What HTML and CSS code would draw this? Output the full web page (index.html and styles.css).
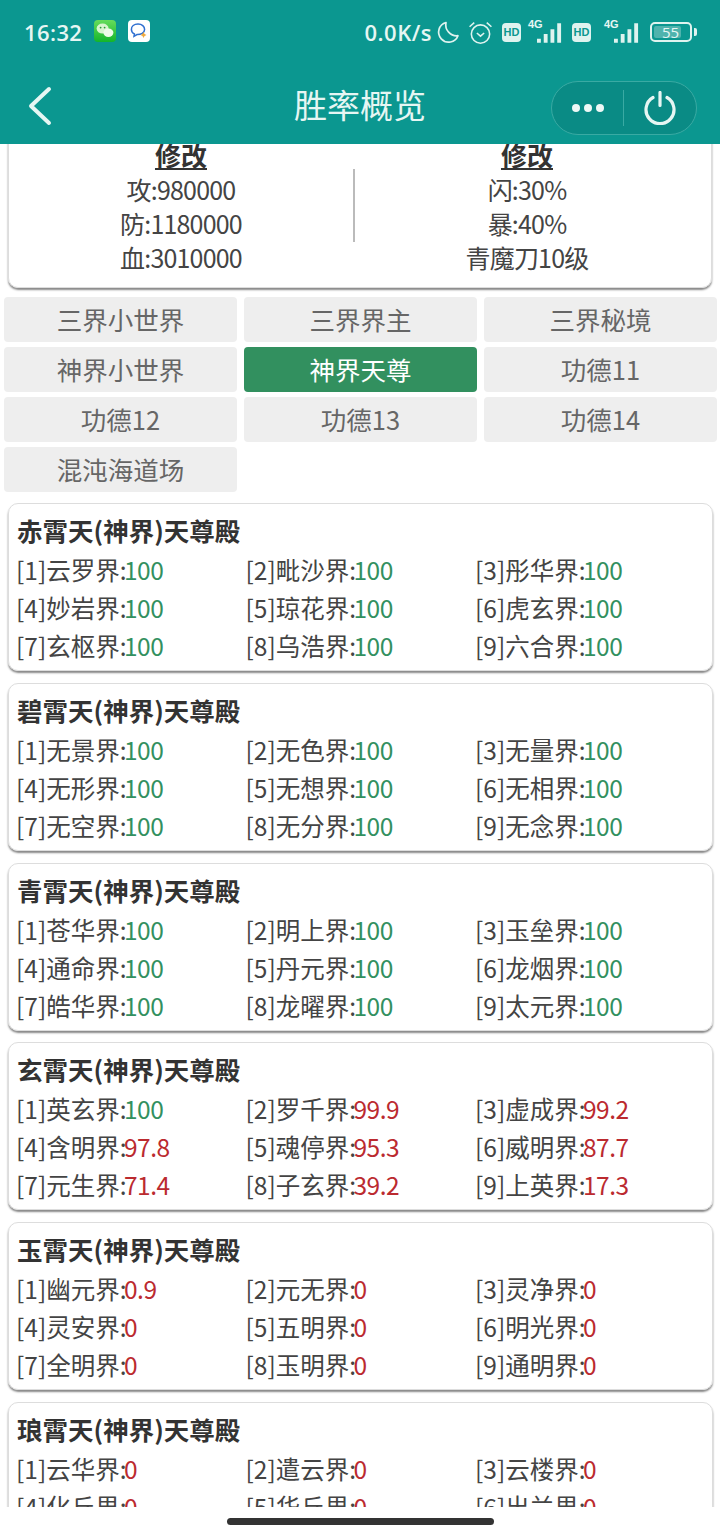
FILE: index.html
```html
<!DOCTYPE html>
<html lang="zh-CN">
<head>
    <meta charset="UTF-8">
    <meta name="viewport" content="width=device-width, initial-scale=1.0">
    <title>胜率概览</title>
    <link rel="stylesheet" href="styles.css">
</head>
<body>
<div class="phone">
    <header class="top">
        <div class="status">
            <span class="time">16:32</span>
            <svg class="app-icon" viewBox="0 0 22 22"><defs><linearGradient id="wx" x1="0" y1="0" x2="0" y2="1"><stop offset="0" stop-color="#66dc5c"/><stop offset="1" stop-color="#14b52a"/></linearGradient></defs><rect width="22" height="22" rx="4" fill="url(#wx)"/><ellipse cx="8.600" cy="8.600" rx="6" ry="5" fill="#d8f5d0"/><ellipse cx="14.400" cy="12.800" rx="5" ry="4.200" fill="#eefbe9"/><circle cx="6.600" cy="7.600" r=".9" fill="#2a9a35"/><circle cx="10.600" cy="7.600" r=".9" fill="#2a9a35"/></svg>
            <svg class="app-icon second" viewBox="0 0 22 22"><rect width="22" height="22" rx="4" fill="#fff"/><path d="M10 4c-4 0-6.600 2.400-6.600 5.400 0 2 1.200 3.600 3 4.500l-.4 2.400 3-1.700c3.800.2 7.600-1.800 7.600-5.200C16.600 6.400 14 4 10 4z" fill="none" stroke="#2f6fd0" stroke-width="1.500"/><path d="M15.500 12l1 2 2 1-2 1-1 2-1-2-2-1 2-1z" fill="#f1a93a"/></svg>
            <span class="status-right">
                <span class="speed">0.0K/s</span>
                <svg class="moon" viewBox="0 0 24 24"><path d="M10 2.500a10 10 0 1 0 12 13.200A11 11 0 0 1 10 2.500z" fill="none" stroke="#dff3ef" stroke-width="1.700" stroke-linejoin="round"/></svg>
                <svg class="alarm" viewBox="0 0 24 24"><circle cx="12" cy="13.500" r="8.800" fill="none" stroke="#dff3ef" stroke-width="1.500"/><path d="M8.500 12.500l3.500 3 3.500-3M1.500 6.500L6 2.500M22.500 6.500L18 2.500" fill="none" stroke="#dff3ef" stroke-width="1.500"/></svg>
                <span class="hd">HD</span>
                <span class="signal">
                    <span class="net">4G</span>
                    <svg viewBox="0 0 27 20"><path d="M0 20v-4h4v4zM7 20v-9h4v9zM14 20V6h4v14zM21 20V0h4v20z" fill="#dff3ef"/></svg>
                </span>
                <span class="hd">HD</span>
                <span class="signal wide">
                    <span class="net">4G</span>
                    <svg viewBox="0 0 27 20"><path d="M0 20v-4h4v4zM7 20v-9h4v9zM14 20V6h4v14zM21 20V0h4v20z" fill="#dff3ef"/></svg>
                </span>
                <span class="battery"><span class="battery-num">55</span></span>
                <span class="battery-tip"></span>
            </span>
        </div>
        <nav class="nav">
            <svg class="back" viewBox="0 0 26 40"><path d="M22 3L4 20l18 17" fill="none" stroke="#e6f6f3" stroke-width="4" stroke-linecap="round" stroke-linejoin="round"/></svg>
            <h1 class="title">胜率概览</h1>
            <div class="capsule">
                <span class="dots"><i></i><i></i><i></i></span>
                <span class="capsule-line"></span>
                <svg class="power" viewBox="0 0 34 34"><path d="M10 6.500a14 14 0 1 0 14 0M17 1.500v13" fill="none" stroke="#e6f6f3" stroke-width="3.200" stroke-linecap="round"/></svg>
            </div>
        </nav>
    </header>

    <main class="content">
        <div class="summary">
            <div class="summary-col">
                <div class="summary-head">修改</div>
                <div>攻:980000</div>
                <div>防:1180000</div>
                <div>血:3010000</div>
            </div>
            <div class="summary-line"></div>
            <div class="summary-col">
                <div class="summary-head">修改</div>
                <div>闪:30%</div>
                <div>暴:40%</div>
                <div>青魔刀10级</div>
            </div>
        </div>

        <div class="tabs">
            <div class="tab">三界小世界</div>
            <div class="tab">三界界主</div>
            <div class="tab">三界秘境</div>
            <div class="tab">神界小世界</div>
            <div class="tab active">神界天尊</div>
            <div class="tab">功德11</div>
            <div class="tab">功德12</div>
            <div class="tab">功德13</div>
            <div class="tab">功德14</div>
            <div class="tab">混沌海道场</div>
        </div>

        <section class="card">
            <h2>赤霄天(神界)天尊殿</h2>
            <div class="grid">
                <div>[1]云罗界:<span class="win">100</span></div>
                <div>[2]毗沙界:<span class="win">100</span></div>
                <div>[3]彤华界:<span class="win">100</span></div>
                <div>[4]妙岩界:<span class="win">100</span></div>
                <div>[5]琼花界:<span class="win">100</span></div>
                <div>[6]虎玄界:<span class="win">100</span></div>
                <div>[7]玄枢界:<span class="win">100</span></div>
                <div>[8]乌浩界:<span class="win">100</span></div>
                <div>[9]六合界:<span class="win">100</span></div>
            </div>
        </section>
        <section class="card">
            <h2>碧霄天(神界)天尊殿</h2>
            <div class="grid">
                <div>[1]无景界:<span class="win">100</span></div>
                <div>[2]无色界:<span class="win">100</span></div>
                <div>[3]无量界:<span class="win">100</span></div>
                <div>[4]无形界:<span class="win">100</span></div>
                <div>[5]无想界:<span class="win">100</span></div>
                <div>[6]无相界:<span class="win">100</span></div>
                <div>[7]无空界:<span class="win">100</span></div>
                <div>[8]无分界:<span class="win">100</span></div>
                <div>[9]无念界:<span class="win">100</span></div>
            </div>
        </section>
        <section class="card">
            <h2>青霄天(神界)天尊殿</h2>
            <div class="grid">
                <div>[1]苍华界:<span class="win">100</span></div>
                <div>[2]明上界:<span class="win">100</span></div>
                <div>[3]玉垒界:<span class="win">100</span></div>
                <div>[4]通命界:<span class="win">100</span></div>
                <div>[5]丹元界:<span class="win">100</span></div>
                <div>[6]龙烟界:<span class="win">100</span></div>
                <div>[7]皓华界:<span class="win">100</span></div>
                <div>[8]龙曜界:<span class="win">100</span></div>
                <div>[9]太元界:<span class="win">100</span></div>
            </div>
        </section>
        <section class="card">
            <h2>玄霄天(神界)天尊殿</h2>
            <div class="grid">
                <div>[1]英玄界:<span class="win">100</span></div>
                <div>[2]罗千界:<span class="lose">99.9</span></div>
                <div>[3]虚成界:<span class="lose">99.2</span></div>
                <div>[4]含明界:<span class="lose">97.8</span></div>
                <div>[5]魂停界:<span class="lose">95.3</span></div>
                <div>[6]威明界:<span class="lose">87.7</span></div>
                <div>[7]元生界:<span class="lose">71.4</span></div>
                <div>[8]子玄界:<span class="lose">39.2</span></div>
                <div>[9]上英界:<span class="lose">17.3</span></div>
            </div>
        </section>
        <section class="card">
            <h2>玉霄天(神界)天尊殿</h2>
            <div class="grid">
                <div>[1]幽元界:<span class="lose">0.9</span></div>
                <div>[2]元无界:<span class="lose">0</span></div>
                <div>[3]灵净界:<span class="lose">0</span></div>
                <div>[4]灵安界:<span class="lose">0</span></div>
                <div>[5]五明界:<span class="lose">0</span></div>
                <div>[6]明光界:<span class="lose">0</span></div>
                <div>[7]全明界:<span class="lose">0</span></div>
                <div>[8]玉明界:<span class="lose">0</span></div>
                <div>[9]通明界:<span class="lose">0</span></div>
            </div>
        </section>
        <section class="card">
            <h2>琅霄天(神界)天尊殿</h2>
            <div class="grid">
                <div>[1]云华界:<span class="lose">0</span></div>
                <div>[2]遣云界:<span class="lose">0</span></div>
                <div>[3]云楼界:<span class="lose">0</span></div>
                <div>[4]化丘界:<span class="lose">0</span></div>
                <div>[5]华丘界:<span class="lose">0</span></div>
                <div>[6]出兰界:<span class="lose">0</span></div>
            </div>
        </section>
    </main>

    <footer class="home-bar"><span class="home-pill"></span></footer>
</div>
</body>
</html>
```

FILE: styles.css
```css
* {
    box-sizing: border-box;
}

html, body {
    margin: 0;
    padding: 0;
}

body {
    font-family: "Noto Sans CJK SC", sans-serif;
    color: #444;
    background: #fff;
}

.phone {
    width: 720px;
    height: 1536px;
    display: flex;
    flex-direction: column;
    overflow: hidden;
}

/* barra de cima */
.top {
    height: 144px;
    flex: none;
    background: #0b9790;
    color: #e6f6f3;
}

.status {
    height: 64px;
    padding: 0 23px 0 24px;
    display: flex;
    align-items: center;
    font-family: "Open Sans", sans-serif;
}

.time {
    font-size: 22px;
    font-weight: 600;
    letter-spacing: .4px;
}

.app-icon {
    width: 22px;
    height: 22px;
    margin-left: 12px;
    margin-top: -2px;
}

.status-right {
    margin-left: auto;
    display: flex;
    align-items: center;
}

.speed {
    font-size: 22px;
    font-weight: 600;
    letter-spacing: .5px;
}

.moon {
    width: 24px;
    height: 24px;
    margin-left: 4px;
}

.alarm {
    width: 25px;
    height: 25px;
    margin-left: 8px;
}

.hd {
    width: 19px;
    height: 19px;
    margin-left: 9px;
    border-radius: 4px;
    background: #dff3ef;
    color: #0b9790;
    font-family: "Liberation Sans", sans-serif;
    font-size: 11px;
    font-weight: 700;
    line-height: 19px;
    text-align: center;
}

.signal {
    position: relative;
    width: 35px;
    height: 22px;
    margin-left: 7px;
    display: flex;
    align-items: flex-end;
    justify-content: flex-end;
}

.signal.wide {
    width: 38px;
    margin-left: 11px;
}

.signal svg {
    width: 26px;
    height: 20px;
}

.net {
    position: absolute;
    left: 0;
    top: -3px;
    font-family: "Liberation Sans", sans-serif;
    font-size: 11px;
    font-weight: 700;
}

.signal.wide .net {
    left: 2px;
}

.battery {
    width: 42px;
    height: 20px;
    margin-left: 10px;
    border: 2px solid #dff3ef;
    border-radius: 5px;
    padding: 2px;
    display: flex;
}

.battery-num {
    width: 27px;
    background: #4fb3ad;
    border-radius: 2px;
    font-size: 15px;
    line-height: 12px;
    white-space: nowrap;
    text-indent: 8px;
}

.battery-tip {
    width: 3px;
    height: 8px;
    margin-left: 2px;
    border-radius: 0 2px 2px 0;
    background: #dff3ef;
}

.nav {
    position: relative;
    height: 80px;
    display: flex;
    align-items: center;
    justify-content: center;
}

.back {
    position: absolute;
    left: 27px;
    top: 22px;
    width: 26px;
    height: 40px;
}

.title {
    margin: 0;
    font-size: 33px;
    font-weight: 400;
    line-height: 44px;
}

.capsule {
    position: absolute;
    left: 551px;
    top: 17px;
    width: 146px;
    height: 54px;
    border: 1px solid #3aaaa3;
    border-radius: 27px;
    background: #0a8b85;
    display: flex;
    align-items: center;
}

.dots {
    width: 71px;
    display: flex;
    justify-content: center;
    gap: 4px;
}

.dots i {
    width: 8px;
    height: 8px;
    border-radius: 50%;
    background: #eef8f6;
}

.capsule-line {
    width: 1px;
    height: 36px;
    background: #3aaaa3;
}

.power {
    width: 34px;
    height: 34px;
    margin-left: 19px;
}

/* conteudo */
.content {
    flex: 1;
    min-height: 0;
    overflow: hidden;
    font-size: 25px;
}

.summary {
    height: 166px;
    margin: -22px 8px 0 8px;
    padding: 15px 12px 0 0;
    border: 1px solid #ddd;
    border-radius: 10px;
    box-shadow: 0 2px 2px #888;
    display: flex;
    align-items: flex-start;
    text-align: center;
    line-height: 34px;
    letter-spacing: -.8px;
}

.summary-col {
    flex: 1;
}

.summary-head {
    font-size: 26px;
    font-weight: 700;
    color: #333;
    letter-spacing: 0;
    text-decoration: underline;
}

.summary-line {
    width: 2px;
    height: 73px;
    margin-top: 31px;
    background: #bbb;
}

.tabs {
    margin: 9px 3px 0 4px;
    display: grid;
    grid-template-columns: repeat(3, 233px);
    column-gap: 7px;
    row-gap: 5px;
}

.tab {
    height: 45px;
    border-radius: 4px;
    background: #eee;
    color: #666;
    font-size: 25.500px;
    line-height: 44px;
    text-align: center;
}

.tab.active {
    background: #32905f;
    color: #fff;
}

.card {
    height: 168px;
    margin: 11.750px 7px 0 8px;
    padding: 7px 9px 0 8px;
    border: 1px solid #ddd;
    border-radius: 10px;
    box-shadow: 0 2px 2px #888;
}

.tabs + .card {
    margin-top: 11px;
}

.card h2 {
    margin: 0;
    font-size: 25.500px;
    font-weight: 700;
    color: #333;
    line-height: 38px;
}

.grid {
    margin: 2px 0 0 -1px;
    display: grid;
    grid-template-columns: repeat(3, 229.500px);
    font-size: 24.500px;
    line-height: 38px;
    white-space: nowrap;
}

.win, .lose {
    margin-left: -2.500px;
    letter-spacing: -.5px;
}

.win {
    color: #32905f;
}

.lose {
    color: #bb2a2f;
}

.home-bar {
    height: 29px;
    flex: none;
    background: #fff;
    display: flex;
    justify-content: center;
    padding-top: 11px;
}

.home-pill {
    width: 267px;
    height: 7px;
    border-radius: 4px;
    background: #333;
}
```
